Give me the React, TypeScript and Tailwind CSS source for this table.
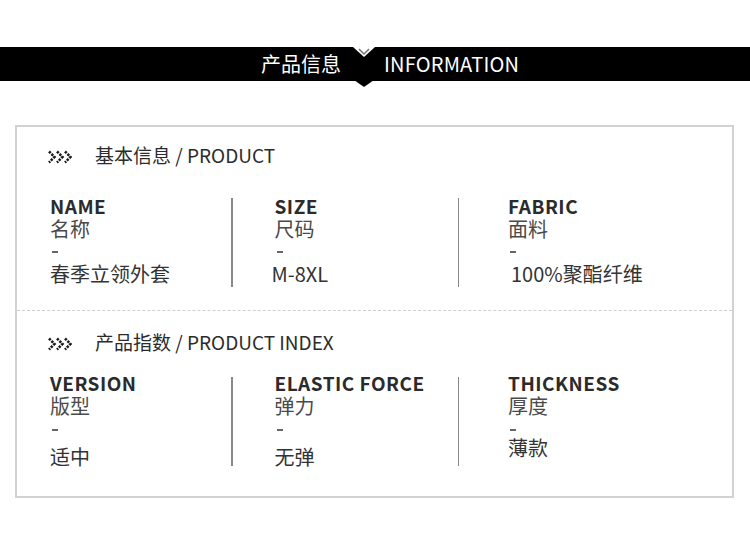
import React from "react";

type Item = { en: string; cn: string; value: string; valueShift?: number };

const FONT = { fontFamily: '"Noto Sans CJK SC", "Noto Sans", sans-serif' };

function Chevrons() {
  return (
    <svg width="24" height="14" viewBox="0 0 24 14" className="shrink-0 mt-[4px]">
      {[0, 8, 16].map((x) => (
        <polyline
          key={x}
          points={`${x + 1},1.5 ${x + 6.5},7 ${x + 1},12.5`}
          fill="none"
          stroke="#1a1a1a"
          strokeWidth="2.6"
          strokeDasharray="2.4 1.1"
        />
      ))}
    </svg>
  );
}

function Column({
  item,
  dashGap,
  valueGap,
  className,
}: {
  item: Item;
  dashGap: string;
  valueGap: string;
  className: string;
}) {
  return (
    <div className={`flex flex-col ${className}`}>
      <div className="text-[19px] leading-[19px] mt-[2px] font-bold tracking-[0.5px] text-[#2b2b2b]">{item.en}</div>
      <div className="text-[20px] leading-[21px] mt-[3px] text-[#4a4a4a]">{item.cn}</div>
      <div className={`${dashGap} w-[6px] h-[1.5px] bg-[#666] ml-[2px]`} />
      <div
        className={`text-[20px] leading-[22px] text-[#333] ${valueGap}`}
        style={item.valueShift ? { transform: `translate(${item.valueShift}px, 0)` } : undefined}
      >
        {item.value}
      </div>
    </div>
  );
}

function Section({
  title,
  items,
  top,
  rowGap,
  dividerGap,
  dashGap,
  valueGap,
  lastGap,
}: {
  title: string;
  items: Item[];
  top: string;
  rowGap: string;
  dividerGap: string;
  dashGap: string;
  valueGap: string;
  lastGap?: string;
}) {
  return (
    <div className={`pl-[31px] ${top}`}>
      <div className="flex items-center gap-[23px] h-[24px]">
        <Chevrons />
        <span className="text-[19px] text-[#2b2b2b]">{title}</span>
      </div>
      <div className={`flex items-start ${rowGap}`}>
        <Column item={items[0]} dashGap={dashGap} valueGap={valueGap} className="w-[183px] pl-[2px]" />
        <div className={`w-[1.5px] h-[89px] bg-[#888] ${dividerGap}`} />
        <Column item={items[1]} dashGap={dashGap} valueGap={valueGap} className="w-[225px] pl-[42px]" />
        <div className={`w-[1.5px] h-[89px] bg-[#888] ${dividerGap}`} />
        <Column item={items[2]} dashGap={dashGap} valueGap={lastGap ?? valueGap} className="pl-[49px]" />
      </div>
    </div>
  );
}

export default function App() {
  const basic: Item[] = [
    { en: "NAME", cn: "名称", value: "春季立领外套" },
    { en: "SIZE", cn: "尺码", value: "M-8XL", valueShift: -3 },
    { en: "FABRIC", cn: "面料", value: "100%聚酯纤维", valueShift: 3 },
  ];
  const index: Item[] = [
    { en: "VERSION", cn: "版型", value: "适中" },
    { en: "ELASTIC FORCE", cn: "弹力", value: "无弹" },
    { en: "THICKNESS", cn: "厚度", value: "薄款" },
  ];

  return (
    <div className="w-[750px] h-[545px] bg-white overflow-hidden" style={FONT}>
      {/* header band */}
      <div className="relative mt-[47px] h-[34px] bg-black flex items-center text-white text-[20px]">
        <div className="w-[364px] text-right pr-[23px] leading-none">产品信息</div>
        <div className="pl-[20px] leading-none tracking-[0.2px]">INFORMATION</div>
        <svg className="absolute left-[353px] top-0" width="22" height="11" viewBox="0 0 22 11">
          <polygon points="0,0 22,0 11,10" fill="#fff" />
          <polyline points="6,2 11,7 16,2" fill="none" stroke="#777" strokeWidth="1.5" />
        </svg>
        <svg className="absolute left-[354px] top-[33px]" width="20" height="8" viewBox="0 0 20 8">
          <polygon points="0,0 20,0 10,7" fill="#000" />
        </svg>
      </div>

      {/* card */}
      <div className="ml-[15px] mt-[44px] w-[719px] h-[373px] border-2 border-[#d2d2d2]">
        <Section
          title="基本信息 / PRODUCT"
          items={basic}
          top="pt-[16px] h-[183px]"
          rowGap="mt-[27px]"
          dividerGap="mt-[4px]"
          dashGap="mt-[12px]"
          valueGap="mt-[10px]"
        />
        <div className="border-t border-dashed border-[#cfcfcf]" />
        <Section
          title="产品指数 / PRODUCT INDEX"
          items={index}
          top="pt-[19px]"
          rowGap="mt-[17px]"
          dividerGap="mt-[6px]"
          dashGap="mt-[13px]"
          valueGap="mt-[15px]"
          lastGap="mt-[6px]"
        />
      </div>
    </div>
  );
}
